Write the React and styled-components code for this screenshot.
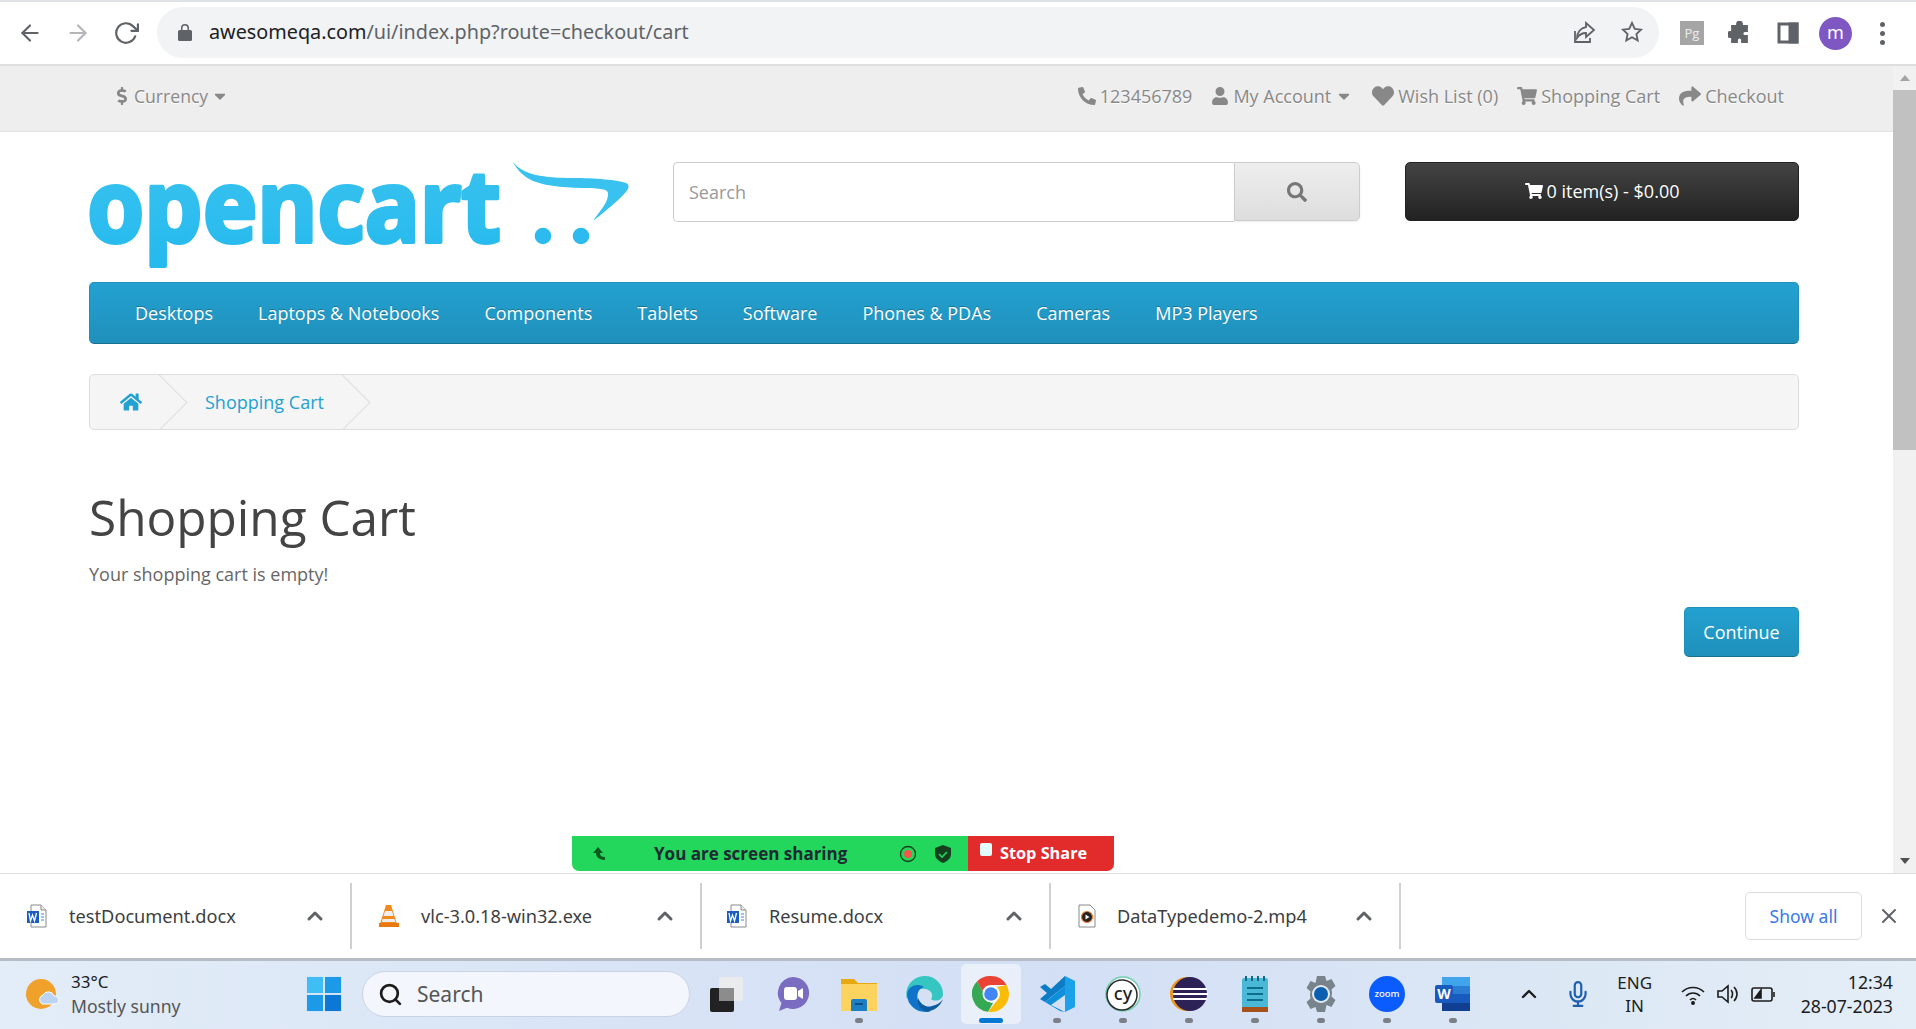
import React from "react";
import styled, { createGlobalStyle } from "styled-components";
import {
  FaPhone,
  FaUser,
  FaHeart,
  FaShoppingCart,
  FaShare,
  FaSearch,
  FaHome,
  FaCaretDown,
  FaDollarSign,
} from "react-icons/fa";
import { FiArrowLeft, FiArrowRight, FiRotateCw, FiChevronUp, FiX, FiMic, FiSearch } from "react-icons/fi";

const Global = createGlobalStyle`
  html, body { margin: 0; padding: 0; background: #fff; }
  * { box-sizing: border-box; }
`;

const Screen = styled.div`
  width: 1916px;
  height: 1029px;
  display: flex;
  flex-direction: column;
  overflow: hidden;
  font-family: "Open Sans", "Noto Sans", sans-serif;
  color: #666;
`;

/* browser toolbar */
const Toolbar = styled.div`
  height: 66px;
  flex: none;
  display: flex;
  align-items: center;
  gap: 14px;
  padding: 0 0 0 13px;
  background: #fff;
  border-top: 2px solid #dee1e6;
  border-bottom: 2px solid #dedede;
`;

const NavBtn = styled.span`
  width: 34px;
  display: flex;
  justify-content: center;
  color: ${(p) => (p.$off ? "#b4b6b9" : "#5f6368")};
  font-size: 26px;
`;

const UrlPill = styled.div`
  width: 1502px;
  height: 51px;
  margin-top: -1px;
  border-radius: 26px;
  background: #f1f3f4;
  display: flex;
  align-items: center;
  padding: 0 15px 2px 21px;
  font-family: "Noto Sans", sans-serif;
  font-size: 19.8px;
  color: #5f6368;
`;

const UrlHost = styled.span`
  color: #202124;
`;

const LockIcon = styled.svg`
  width: 14px;
  height: 18px;
  margin-right: 17px;
  fill: #5f6368;
`;

const PillTools = styled.div`
  margin-left: auto;
  display: flex;
  align-items: center;
  gap: 24px;
`;

const ToolIcon = styled.svg`
  width: 24px;
  height: 24px;
  fill: ${(p) => (p.$solid ? "#5f6368" : "none")};
  stroke: #5f6368;
  stroke-width: ${(p) => p.$weight || 1.8};
`;

const Extensions = styled.div`
  display: flex;
  align-items: center;
  gap: 24px;
  margin-left: 7px;
`;

const PgBadge = styled.span`
  width: 24px;
  height: 24px;
  background: #a5a5a5;
  color: #eee;
  font-size: 13px;
  display: flex;
  align-items: center;
  justify-content: center;
`;

const Avatar = styled.span`
  width: 33px;
  height: 33px;
  margin-left: -5px;
  border-radius: 50%;
  background: #7e57c2;
  color: #fff;
  font-size: 18px;
  font-family: "Noto Sans", sans-serif;
  display: flex;
  align-items: center;
  justify-content: center;
  padding-bottom: 3px;
`;

const Kebab = styled.span`
  display: flex;
  flex-direction: column;
  gap: 4px;
  margin-left: 4px;
  i {
    width: 5px;
    height: 5px;
    border-radius: 50%;
    background: #5f6368;
  }
`;

/* web page area */
const Viewport = styled.div`
  flex: 1;
  min-height: 0;
  display: flex;
  position: relative;
`;

const Page = styled.div`
  flex: 1;
  min-width: 0;
`;

const TopBar = styled.div`
  height: 66px;
  background: #eee;
  border-bottom: 1px solid #e2e2e2;
  display: flex;
  align-items: center;
  justify-content: space-between;
  padding: 0 109px 6px 113px;
  font-size: 18px;
  color: #888;
  text-shadow: 0 1px 0 #fff;
`;

const TopGroup = styled.div`
  display: flex;
  align-items: center;
  gap: 19px;
`;

const TopLink = styled.span`
  display: flex;
  align-items: center;
  gap: ${(p) => p.$gap || 4}px;
  font-size: ${(p) => p.$text || 18}px;
  svg {
    font-size: ${(p) => p.$icon || 18}px;
    flex: none;
  }
`;

const PhoneIcon = styled(FaPhone)`
  transform: scaleX(-1);
`;

const Wrap = styled.div`
  padding: 0 94px 0 89px;
`;

const HeaderRow = styled.div`
  height: 150px;
  padding-top: 30px;
  display: flex;
  align-items: flex-start;
`;

const LogoSvg = styled.svg`
  width: 541px;
  height: 105px;
  flex: none;
  overflow: visible;
`;

const SearchGroup = styled.div`
  margin-left: 43px;
  width: 687px;
  height: 60px;
  flex: none;
  display: flex;
`;

const SearchInput = styled.div`
  flex: 1;
  border: 1px solid #ccc;
  border-right: 0;
  border-radius: 5px 0 0 5px;
  display: flex;
  align-items: center;
  padding-left: 15px;
  font-size: 18px;
  color: #999;
`;

const SearchBtn = styled.div`
  width: 126px;
  height: 59px;
  border: 1px solid #ccc;
  border-radius: 0 5px 5px 0;
  background: linear-gradient(#eee, #ddd);
  display: flex;
  align-items: center;
  justify-content: center;
  color: #777;
  font-size: 20px;
  box-shadow: 0 1px 2px rgba(0, 0, 0, 0.08);
`;

const CartBtn = styled.div`
  margin-left: 45px;
  width: 394px;
  height: 59px;
  flex: none;
  border: 1px solid #222;
  border-radius: 5px;
  background: linear-gradient(#444, #222);
  color: #fff;
  font-size: 18px;
  display: flex;
  align-items: center;
  justify-content: center;
  gap: 4px;
  padding-bottom: 1px;
  text-shadow: 0 -1px 0 rgba(0, 0, 0, 0.25);
`;

const Menu = styled.nav`
  height: 62px;
  border: 1px solid #1f90bb;
  border-bottom-color: #1a6f8f;
  border-radius: 5px;
  background: linear-gradient(#23a1d1, #1f90bb);
  display: flex;
  align-items: center;
  padding-left: 45px;
  gap: 45px;
  color: #fff;
  font-size: 18px;
  text-shadow: 0 -1px 0 rgba(0, 0, 0, 0.25);
`;

const Breadcrumb = styled.div`
  margin-top: 30px;
  height: 56px;
  border: 1px solid #ddd;
  border-radius: 5px;
  background: #f5f5f5;
  display: flex;
  overflow: hidden;
  color: #23a1d1;
  font-size: 18px;
`;

const Crumb = styled.span`
  position: relative;
  display: flex;
  align-items: center;
  padding: 0 ${(p) => p.$right}px 0 ${(p) => p.$left}px;
  &::after {
    content: "";
    position: absolute;
    top: 7px;
    right: 7px;
    width: 40px;
    height: 40px;
    border-top: 1px solid #ddd;
    border-right: 1px solid #ddd;
    transform: rotate(45deg);
  }
`;

const Title = styled.h1`
  margin: 53px 0 0;
  font-size: 49.5px;
  line-height: 68px;
  font-weight: 400;
  color: #444;
`;

const EmptyText = styled.p`
  margin: 10px 0 0;
  font-size: 18px;
  line-height: 27px;
`;

const Buttons = styled.div`
  margin-top: 19px;
  display: flex;
  justify-content: flex-end;
`;

const PrimaryBtn = styled.div`
  width: 115px;
  height: 50px;
  padding-bottom: 1px;
  border: 1px solid #1f90bb;
  border-bottom-color: #1a6f8f;
  border-radius: 5px;
  background: linear-gradient(#23a1d1, #1f90bb);
  color: #fff;
  font-size: 18px;
  display: flex;
  align-items: center;
  justify-content: center;
`;

const Scrollbar = styled.div`
  width: 23px;
  flex: none;
  background: #f1f1f1;
  display: flex;
  flex-direction: column;
  align-items: stretch;
`;

const ScrollArrow = styled.span`
  height: 24px;
  flex: none;
  display: flex;
  align-items: center;
  justify-content: center;
  margin-top: ${(p) => (p.$down ? "auto" : "0")};
  &::before {
    content: "";
    border-left: 5px solid transparent;
    border-right: 5px solid transparent;
    ${(p) => (p.$down ? "border-top: 6px solid #505050;" : "border-bottom: 6px solid #a3a3a3;")}
  }
`;

const ScrollThumb = styled.div`
  height: 360px;
  background: #c1c1c1;
`;

/* zoom share bar, floats over the page */
const ShareBar = styled.div`
  position: absolute;
  left: 572px;
  bottom: 2px;
  width: 542px;
  height: 35px;
  border-radius: 0 0 7px 7px;
  overflow: hidden;
  display: flex;
  font-weight: 700;
  font-size: 17px;
`;

const ShareGreen = styled.div`
  width: 396px;
  background: #23d75c;
  color: #1d2a33;
  display: flex;
  align-items: center;
  padding-left: 20px;
`;

const ShareLabel = styled.span`
  margin-left: 46px;
`;

const RecordIcon = styled.svg`
  margin-left: 52px;
`;

const ShieldIcon = styled.svg`
  margin-left: 18px;
`;

const ShareRed = styled.div`
  flex: 1;
  background: #e22b2b;
  color: #fff;
  font-size: 16.3px;
  display: flex;
  align-items: center;
  gap: 8px;
  padding: 0 0 1px 12px;
`;

const StopBox = styled.span`
  width: 12px;
  height: 13px;
  margin-top: -7px;
  border-radius: 2px;
  background: #e2fbfb;
`;

/* downloads */
const Shelf = styled.div`
  height: 85px;
  flex: none;
  border-top: 1px solid #dcdcdc;
  background: #fff;
  display: flex;
  align-items: center;
`;

const Download = styled.div`
  width: ${(p) => p.$width || 350}px;
  height: 66px;
  flex: none;
  border-right: 2px solid #d0d0d0;
  display: flex;
  align-items: center;
  padding-left: ${(p) => p.$pad || 26}px;
  font-family: "Noto Sans", sans-serif;
  font-size: 18.2px;
  color: #3c4043;
`;

const FileName = styled.span`
  margin-left: 21px;
`;

const Caret = styled.span`
  margin-left: auto;
  margin-right: 23px;
  display: flex;
  font-size: 24px;
  color: #5f6368;
  svg {
    stroke-width: 3;
  }
`;

const ShelfEnd = styled.div`
  margin-left: auto;
  display: flex;
  align-items: center;
  gap: 15px;
  padding-right: 15px;
  font-size: 24px;
  color: #5f6368;
`;

const ShowAll = styled.div`
  width: 117px;
  height: 48px;
  border: 1px solid #dadce0;
  border-radius: 5px;
  display: flex;
  align-items: center;
  justify-content: center;
  font-family: "Noto Sans", sans-serif;
  font-size: 17.5px;
  color: #3b78e7;
`;

/* windows taskbar */
const Taskbar = styled.div`
  height: 71px;
  flex: none;
  padding-bottom: 2px;
  border-top: 3px solid #b6bcc6;
  background: linear-gradient(90deg, #e3edf8 0%, #d9e4f6 30%, #d3dff5 55%, #dce7f5 80%, #e3eef7 100%);
  display: flex;
  align-items: center;
  font-family: "Noto Sans", sans-serif;
  color: #1c1c1c;
  font-size: 17px;
`;

const Weather = styled.div`
  width: 306px;
  flex: none;
  display: flex;
  align-items: center;
  gap: 11px;
  padding-left: 26px;
  line-height: 25px;
  span {
    display: block;
  }
`;

const WeatherDim = styled.span`
  color: #555;
  font-size: 17.6px;
`;

const StartIcon = styled.svg`
  width: 36px;
  height: 36px;
  flex: none;
`;

const SearchPill = styled.div`
  width: 328px;
  height: 46px;
  flex: none;
  margin-left: 20px;
  border: 1px solid #c8d3e4;
  border-radius: 23px;
  background: #f3f6fc;
  display: flex;
  align-items: center;
  gap: 14px;
  padding-left: 15px;
  font-size: 21px;
  color: #555;
  svg {
    font-size: 25px;
    color: #1c1c1c;
    stroke-width: 2.6;
  }
`;

const AppRow = styled.div`
  display: flex;
  align-items: flex-start;
  margin-left: 4px;
`;

const AppSlot = styled.div`
  position: relative;
  width: 66px;
  height: 60px;
  flex: none;
  border-radius: 5px;
  display: flex;
  align-items: center;
  justify-content: center;
  background: ${(p) => (p.$active ? "rgba(255,255,255,0.5)" : "transparent")};
  &::after {
    content: "";
    display: ${(p) => (p.$dot || p.$active ? "block" : "none")};
    position: absolute;
    bottom: 1px;
    left: 50%;
    width: ${(p) => (p.$active ? 24 : 8)}px;
    height: 5px;
    margin-left: ${(p) => (p.$active ? -12 : -4)}px;
    border-radius: 3px;
    background: ${(p) => (p.$active ? "#0078d4" : "#7c7f86")};
  }
  svg {
    width: 38px;
    height: 38px;
    display: block;
  }
`;

const ActiveTile = styled(AppSlot)`
  width: 60px;
  margin: 0 3px;
`;

const Tray = styled.div`
  margin-left: auto;
  display: flex;
  align-items: center;
  padding-right: 23px;
  font-size: 17px;
  white-space: nowrap;
`;

const TrayCaret = styled.span`
  display: flex;
  font-size: 24px;
  margin-right: 24px;
  svg {
    stroke-width: 2.4;
  }
`;

const Mic = styled.span`
  display: flex;
  font-size: 26px;
  color: #1f5fb0;
  margin-right: 24px;
`;

const Lang = styled.div`
  width: 40px;
  text-align: center;
  line-height: 23px;
  margin-right: 25px;
`;

const StatusIcons = styled.div`
  display: flex;
  align-items: center;
  gap: 9px;
  margin-right: 25px;
  svg {
    width: 26px;
    height: 26px;
    fill: none;
    stroke: #1c1c1c;
    stroke-width: 1.6;
  }
`;

const Clock = styled.div`
  text-align: right;
  line-height: 24px;
  font-size: 17.7px;
`;

const Logo = () => (
  <LogoSvg viewBox="0 0 541 105">
    <defs>
      <linearGradient id="logoBlue" x1="0" y1="0" x2="0" y2="1">
        <stop offset="0" stopColor="#3cc4ef" />
        <stop offset="1" stopColor="#25b9ee" />
      </linearGradient>
    </defs>
    <text
      x="-2"
      y="80"
      fontFamily="Noto Sans"
      fontWeight="700"
      fontSize="100"
      textLength="414"
      lengthAdjust="spacingAndGlyphs"
      fill="url(#logoBlue)"
      stroke="url(#logoBlue)"
      strokeWidth="4"
      strokeLinejoin="round"
    >
      opencart
    </text>
    <path
      d="M424 0C434 13 455 16 484 16C505 16 530 18 537 21C541 23 540 27 536 31C526 42 515 50 504 59C510 50 520 40 519 31C518 27 514 27 501 26C480 26 460 25 444 19C435 15 428 8 424 0Z"
      fill="#39c2ef"
    />
    <circle cx="454" cy="74" r="8.300" fill="#2dbaee" />
    <circle cx="492" cy="74" r="8.300" fill="#2dbaee" />
  </LogoSvg>
);

const WordFile = () => (
  <svg width="22" height="24" viewBox="0 0 22 24">
    <path d="M5 1h10l5 5v17H5z" fill="#fff" stroke="#8a8a8a" />
    <path d="M15 1v5h5" fill="#eee" stroke="#8a8a8a" />
    <rect x="1" y="7" width="12" height="12" fill="#1b5ebe" />
    <path d="M3 9l1.500 8 2-6 2 6L10.500 9" fill="none" stroke="#fff" strokeWidth="1.300" />
    <path d="M15 10h3M15 13h3M15 16h3" stroke="#4a7fd0" />
  </svg>
);

const VlcFile = () => (
  <svg width="22" height="26" viewBox="0 0 22 26">
    <path d="M8 2h5l6 19H2z" fill="#f08a1d" />
    <path d="M7 8h7l1.500 5h-10zM4.500 16h12l1 3H4z" fill="#eee" />
    <path d="M1 20h20v4H1z" fill="#e8780f" />
  </svg>
);

const VideoFile = () => (
  <svg width="18" height="24" viewBox="0 0 18 24">
    <path d="M1 1h11l5 5v17H1z" fill="#fff" stroke="#8a8a8a" />
    <circle cx="9" cy="13" r="5.500" fill="#222" stroke="#f0792b" strokeWidth="1.200" />
    <path d="M7.500 10.500l4 2.500-4 2.500z" fill="#fff" />
  </svg>
);

const AppWindows = () => (
  <StartIcon viewBox="0 0 38 38">
    <rect x="1" y="1" width="17" height="17" fill="#3fbdf5" />
    <rect x="20" y="1" width="17" height="17" fill="#1c9ae8" />
    <rect x="1" y="20" width="17" height="17" fill="#1c9ae8" />
    <rect x="20" y="20" width="17" height="17" fill="#0a78d4" />
  </StartIcon>
);

const AppWidgets = () => (
  <svg viewBox="0 0 38 38">
    <rect x="2" y="13" width="24" height="24" rx="2" fill="#222" />
    <rect x="11" y="2" width="24" height="24" rx="2" fill="#ececec" fillOpacity="0.9" />
    <rect x="11" y="13" width="15" height="13" fill="#8c8c8c" />
  </svg>
);

const AppTeams = () => (
  <svg viewBox="0 0 38 38">
    <path d="M19 2a16 16 0 1 1-6 30.800L5 36l2.500-8A16 16 0 0 1 19 2z" fill="#7a6cc0" />
    <rect x="10" y="12" width="13" height="13" rx="3" fill="#fff" />
    <path d="M24 16l5-3v11l-5-3z" fill="#fff" />
  </svg>
);

const AppFolder = () => (
  <svg viewBox="0 0 38 38">
    <path d="M1 4h13l4 4h19v28H1z" fill="#e7a90f" />
    <rect x="1" y="9" width="36" height="27" fill="#fdd35f" />
    <path d="M11 26a2 2 0 0 1 2-2h12a2 2 0 0 1 2 2v10H11z" fill="#1c7fc4" />
    <rect x="15" y="28" width="8" height="2" fill="#0c4f80" />
  </svg>
);

const AppEdge = () => (
  <svg viewBox="0 0 38 38">
    <path d="M19 1a18 18 0 0 1 18 18c0 7-9 8-12 5 2-2 2-9-6-10C10 13 4 18 1 24A18 18 0 0 1 19 1z" fill="#35c6c2" />
    <path d="M1 20c0-8 9-13 17-8-7 2-8 10-5 16 2 4 7 8 12 8-2 1-4 1-6 1A18 18 0 0 1 1 20z" fill="#0f74c9" />
    <path d="M37 24c-3 8-10 13-18 12-5-2-8-7-7-13 3 7 9 10 14 8 5-1 8-3 11-7z" fill="#0c5aa0" />
  </svg>
);

const AppChrome = () => (
  <svg viewBox="0 0 38 38">
    <path d="M19 1a18 18 0 0 1 15.600 9H19a9 9 0 0 0-8.500 6L5 6.500A18 18 0 0 1 19 1z" fill="#ea4335" />
    <path d="M5 6.500l8.500 14.800A9 9 0 0 0 21 28l-5 8.800A18 18 0 0 1 5 6.500z" fill="#34a853" />
    <path d="M34.600 10A18 18 0 0 1 16 36.800L25.500 25A9 9 0 0 0 25 12z" fill="#fbbc04" />
    <circle cx="19" cy="19" r="8.500" fill="#fff" />
    <circle cx="19" cy="19" r="6.800" fill="#4285f4" />
  </svg>
);

const AppCode = () => (
  <svg viewBox="0 0 38 38">
    <path d="M27 1l10 5v26l-10 5z" fill="#1ba1ea" />
    <path d="M27 1v10L13 22l-6 5-5-3 7-6-7-6 5-3 6 5z" fill="#0c7cc4" />
    <path d="M7 27l20-16v9L13 30l14 7-5-1z" fill="#0f8fdb" />
  </svg>
);

const AppCypress = () => (
  <svg viewBox="0 0 38 38">
    <circle cx="19" cy="19" r="17" fill="#fff" stroke="#6fcfb0" strokeWidth="1.500" />
    <circle cx="18" cy="20" r="15" fill="#fff" stroke="#2b2b2b" strokeWidth="1.500" />
    <text x="19" y="25" textAnchor="middle" fontFamily="Noto Sans" fontSize="18" fontWeight="500" fill="#222">
      cy
    </text>
  </svg>
);

const AppEclipse = () => (
  <svg viewBox="0 0 38 38">
    <circle cx="17" cy="19" r="17" fill="#f0931d" />
    <circle cx="20" cy="19" r="17" fill="#2c2255" />
    <path d="M3 14h34M3 19h35M3 24h34" stroke="#fff" strokeWidth="2" />
  </svg>
);

const AppNotepad = () => (
  <svg viewBox="0 0 38 38">
    <rect x="6" y="3" width="26" height="30" rx="2" fill="#4cb8d8" />
    <rect x="6" y="32" width="26" height="5" fill="#a6521a" />
    <path d="M10 1v5M16 1v5M22 1v5M28 1v5" stroke="#0e6a86" strokeWidth="2" />
    <path d="M11 13h16M11 19h16M11 25h16" stroke="#0f6d8c" strokeWidth="2" />
  </svg>
);

const AppGear = () => (
  <svg viewBox="0 0 38 38">
    <path d="M15 1h8l1.500 5 5-2 4 7-4 3.500a12 12 0 0 1 0 7l4 3.500-4 7-5-2L23 37h-8l-1.500-5-5 2-4-7 4-3.500a12 12 0 0 1 0-7l-4-3.500 4-7 5 2z" fill="#79838c" />
    <circle cx="19" cy="19" r="9" fill="#e3eaf6" />
    <circle cx="19" cy="19" r="7" fill="#0c5fae" />
  </svg>
);

const AppZoom = () => (
  <svg viewBox="0 0 38 38">
    <circle cx="19" cy="19" r="18" fill="#0b5cff" />
    <text x="19" y="22" textAnchor="middle" fontFamily="Noto Sans" fontSize="9.500" fontWeight="500" fill="#fff">
      zoom
    </text>
  </svg>
);

const AppWord = () => (
  <svg viewBox="0 0 38 38">
    <rect x="8" y="2" width="28" height="34" rx="2" fill="#2b7cd3" />
    <rect x="8" y="2" width="28" height="9" fill="#41a5ee" />
    <rect x="8" y="19" width="28" height="9" fill="#185abd" />
    <rect x="8" y="28" width="28" height="8" fill="#103f91" />
    <rect x="1" y="10" width="18" height="18" rx="2" fill="#185abd" />
    <text x="10" y="24" textAnchor="middle" fontFamily="Noto Sans" fontSize="14" fontWeight="700" fill="#fff">
      W
    </text>
  </svg>
);

const menuItems = ["Desktops", "Laptops & Notebooks", "Components", "Tablets", "Software", "Phones & PDAs", "Cameras", "MP3 Players"];

const App = () => (
  <Screen>
    <Global />
    <Toolbar>
      <NavBtn><FiArrowLeft /></NavBtn>
      <NavBtn $off><FiArrowRight /></NavBtn>
      <NavBtn><FiRotateCw /></NavBtn>
      <UrlPill>
        <LockIcon viewBox="0 0 14 18">
          <path d="M3 7V5a4 4 0 0 1 8 0v2h1.500A1.500 1.500 0 0 1 14 8.500v8a1.500 1.500 0 0 1-1.500 1.500h-11A1.500 1.500 0 0 1 0 16.500v-8A1.500 1.500 0 0 1 1.500 7zm1.500 0h5V5a2.500 2.500 0 0 0-5 0z" />
        </LockIcon>
        <UrlHost>awesomeqa.com</UrlHost>/ui/index.php?route=checkout/cart
        <PillTools>
          <ToolIcon viewBox="0 0 24 24">
            <path d="M3 11v11h15v-4" />
            <path d="M14 3l8 7-8 7v-4c-4 0-7 2-9 5 0-6 4-10 9-11z" />
          </ToolIcon>
          <ToolIcon viewBox="0 0 24 24">
            <path d="M12 3l2.800 6 6.200.7-4.600 4.300 1.300 6.500L12 17.200l-5.700 3.300 1.300-6.500L3 9.700 9.200 9z" />
          </ToolIcon>
        </PillTools>
      </UrlPill>
      <Extensions>
        <PgBadge>Pg</PgBadge>
        <ToolIcon viewBox="0 0 24 24" $solid>
          <path d="M9 3a2.500 2.500 0 0 1 5 0v2h5v5h-2a2.500 2.500 0 0 0 0 5h2v6h-5v-2a2.500 2.500 0 0 0-5 0v2H4v-5H2a2.500 2.500 0 0 1 0-5h2V5h5z" />
        </ToolIcon>
        <ToolIcon viewBox="0 0 24 24" $weight={3}>
          <rect x="3" y="3" width="18" height="18" />
          <rect x="14" y="3" width="7" height="18" fill="#5f6368" />
        </ToolIcon>
        <Avatar>m</Avatar>
        <Kebab><i /><i /><i /></Kebab>
      </Extensions>
    </Toolbar>

    <Viewport>
      <Page>
        <TopBar>
          <TopLink $icon={18} $gap={3} $text={17.6}><FaDollarSign /> Currency <FaCaretDown /></TopLink>
          <TopGroup>
            <TopLink><PhoneIcon /> 123456789</TopLink>
            <TopLink><FaUser /> My Account <FaCaretDown /></TopLink>
            <TopLink $icon={22}><FaHeart /> Wish List (0)</TopLink>
            <TopLink $icon={20}><FaShoppingCart /> Shopping Cart</TopLink>
            <TopLink $icon={22}><FaShare /> Checkout</TopLink>
          </TopGroup>
        </TopBar>
        <Wrap>
          <HeaderRow>
            <Logo />
            <SearchGroup>
              <SearchInput>Search</SearchInput>
              <SearchBtn><FaSearch /></SearchBtn>
            </SearchGroup>
            <CartBtn><FaShoppingCart /> 0 item(s) - $0.00</CartBtn>
          </HeaderRow>
          <Menu>
            {menuItems.map((item) => (
              <span key={item}>{item}</span>
            ))}
          </Menu>
          <Breadcrumb>
            <Crumb $left={30} $right={44}><FaHome size={22} /></Crumb>
            <Crumb $left={19} $right={45}>Shopping Cart</Crumb>
          </Breadcrumb>
          <Title>Shopping Cart</Title>
          <EmptyText>Your shopping cart is empty!</EmptyText>
          <Buttons>
            <PrimaryBtn>Continue</PrimaryBtn>
          </Buttons>
        </Wrap>
      </Page>
      <Scrollbar>
        <ScrollArrow />
        <ScrollThumb />
        <ScrollArrow $down />
      </Scrollbar>

      <ShareBar>
        <ShareGreen>
          <svg width="16" height="16" viewBox="0 0 16 16">
            <path d="M6 1L1 7h3c0 4 3 7 9 7v-3c-3 0-5-1-5-4h3z" fill="#0b5b1e" />
          </svg>
          <ShareLabel>You are screen sharing</ShareLabel>
          <RecordIcon width="18" height="18" viewBox="0 0 18 18">
            <circle cx="9" cy="9" r="7.500" fill="none" stroke="#14401f" strokeWidth="1.300" />
            <circle cx="9" cy="9" r="4" fill="#f2574a" />
          </RecordIcon>
          <ShieldIcon width="16" height="18" viewBox="0 0 16 18">
            <path d="M8 0l8 3v6c0 4-3 7-8 9-5-2-8-5-8-9V3z" fill="#14401f" />
            <path d="M4 9l3 3 5-5" fill="none" stroke="#23d75c" strokeWidth="1.600" />
          </ShieldIcon>
        </ShareGreen>
        <ShareRed><StopBox />Stop Share</ShareRed>
      </ShareBar>
    </Viewport>

    <Shelf>
      <Download $width={352}>
        <WordFile />
        <FileName>testDocument.docx</FileName>
        <Caret><FiChevronUp /></Caret>
      </Download>
      <Download $pad={26}>
        <VlcFile />
        <FileName>vlc-3.0.18-win32.exe</FileName>
        <Caret><FiChevronUp /></Caret>
      </Download>
      <Download $pad={24} $width={349}>
        <WordFile />
        <FileName>Resume.docx</FileName>
        <Caret><FiChevronUp /></Caret>
      </Download>
      <Download $pad={27}>
        <VideoFile />
        <FileName>DataTypedemo-2.mp4</FileName>
        <Caret><FiChevronUp /></Caret>
      </Download>
      <ShelfEnd>
        <ShowAll>Show all</ShowAll>
        <FiX />
      </ShelfEnd>
    </Shelf>

    <Taskbar>
      <Weather>
        <svg width="34" height="34" viewBox="0 0 34 34">
          <circle cx="15" cy="17" r="15" fill="#f0a12b" />
          <path d="M16 27a5 5 0 0 1 1-9 6 6 0 0 1 11 1 4 4 0 0 1 1 8z" fill="#bcd3f2" stroke="#fff" />
        </svg>
        <div>
          <span>33°C</span>
          <WeatherDim>Mostly sunny</WeatherDim>
        </div>
      </Weather>
      <AppWindows />
      <SearchPill><FiSearch />Search</SearchPill>
      <AppRow>
        <AppSlot><AppWidgets /></AppSlot>
        <AppSlot><AppTeams /></AppSlot>
        <AppSlot $dot><AppFolder /></AppSlot>
        <AppSlot><AppEdge /></AppSlot>
        <ActiveTile $active><AppChrome /></ActiveTile>
        <AppSlot $dot><AppCode /></AppSlot>
        <AppSlot $dot><AppCypress /></AppSlot>
        <AppSlot $dot><AppEclipse /></AppSlot>
        <AppSlot $dot><AppNotepad /></AppSlot>
        <AppSlot $dot><AppGear /></AppSlot>
        <AppSlot $dot><AppZoom /></AppSlot>
        <AppSlot $dot><AppWord /></AppSlot>
      </AppRow>
      <Tray>
        <TrayCaret><FiChevronUp /></TrayCaret>
        <Mic><FiMic /></Mic>
        <Lang>ENG<br />IN</Lang>
        <StatusIcons>
          <svg viewBox="0 0 26 26">
            <path d="M2 11c6-6 16-6 22 0M6 15c4-4 10-4 14 0M10 19c2-2 4-2 6 0" />
            <circle cx="13" cy="22" r="1.200" fill="#1c1c1c" />
          </svg>
          <svg viewBox="0 0 26 26">
            <path d="M3 10h4l6-5v16l-6-5H3zM16 9c2 2 2 6 0 8M19 6c4 4 4 10 0 14" />
          </svg>
          <svg viewBox="0 0 26 26">
            <rect x="2" y="7" width="20" height="13" rx="2" />
            <path d="M24 11v5" />
            <path d="M5 17l6-8v8z" fill="#1c1c1c" />
          </svg>
        </StatusIcons>
        <Clock>12:34<br />28-07-2023</Clock>
      </Tray>
    </Taskbar>
  </Screen>
);

export default App;
